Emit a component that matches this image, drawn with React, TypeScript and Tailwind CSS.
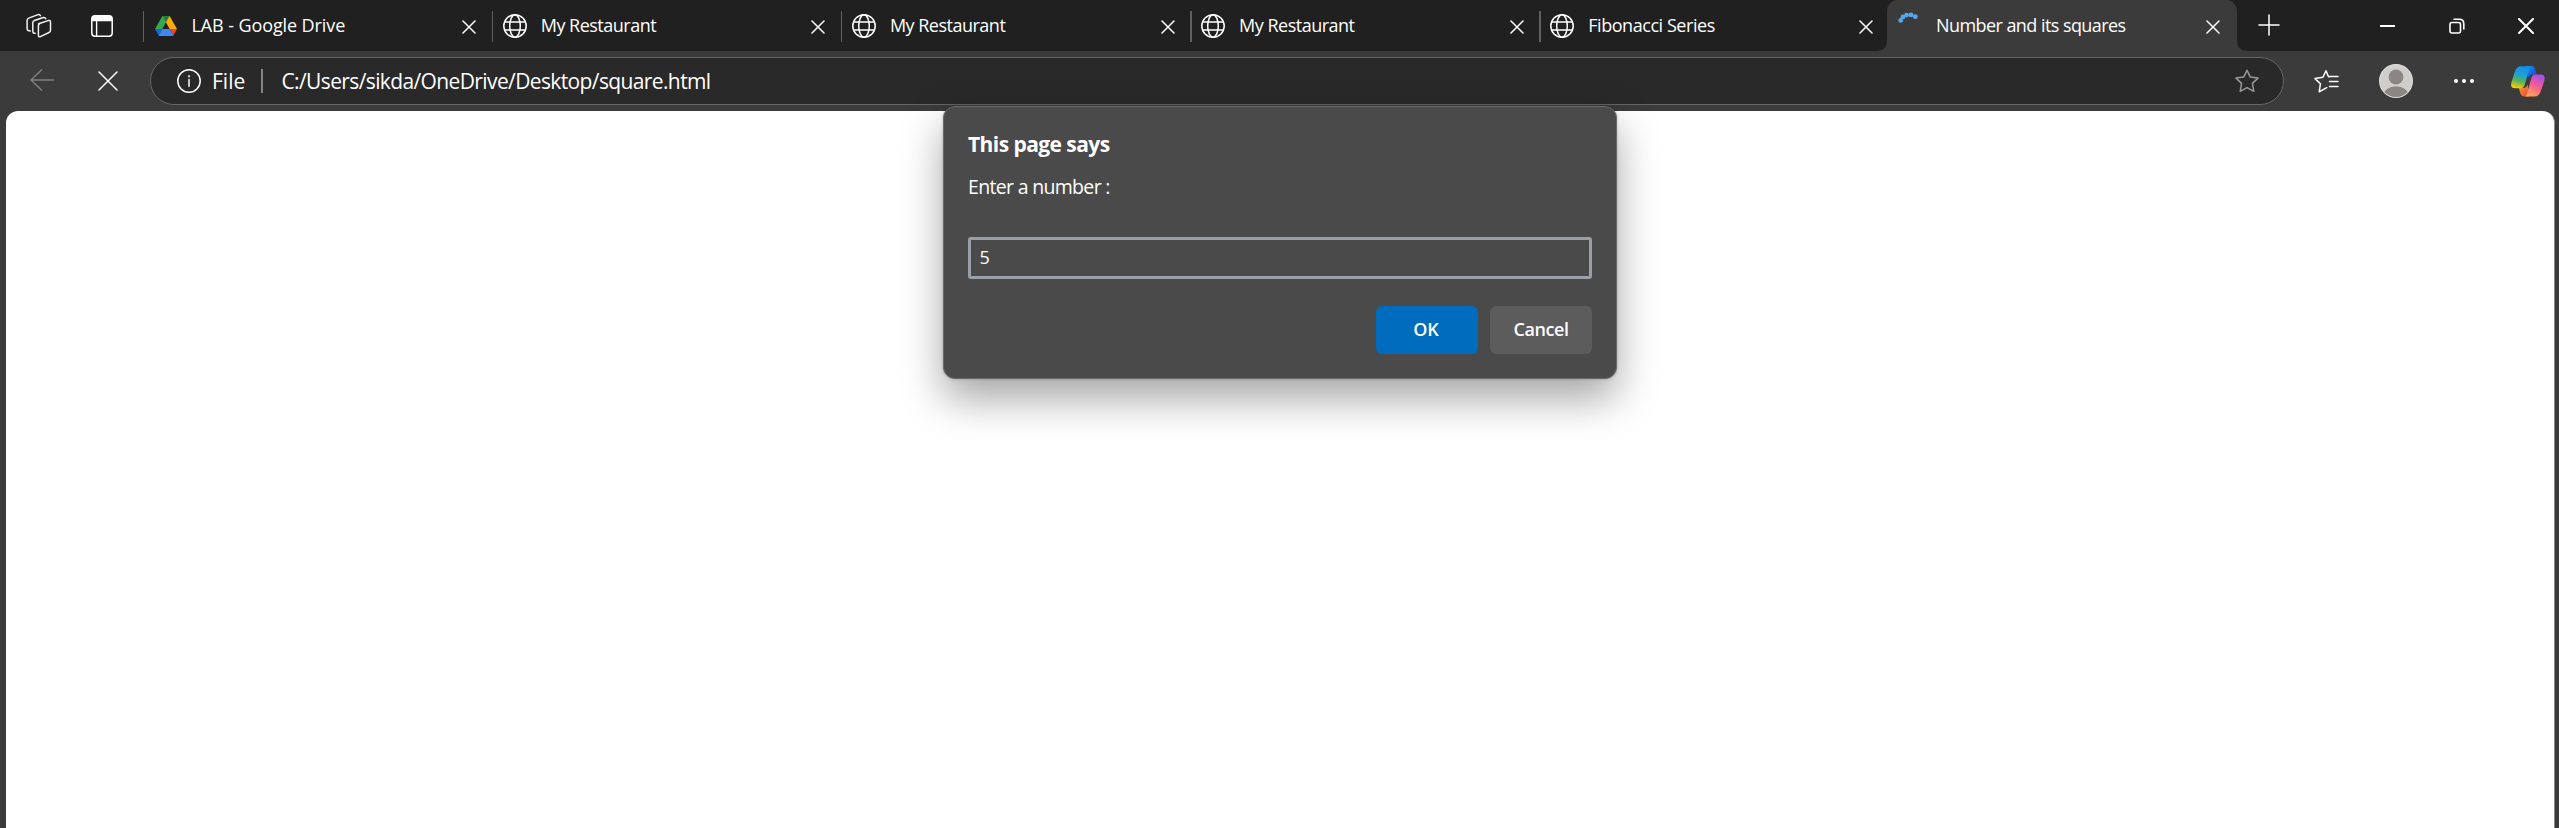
import type { ReactNode } from "react";

function Cross({ size, stroke = 1.5 }: { size: number; stroke?: number }) {
  return (
    <svg width={size} height={size} viewBox={`0 0 ${size} ${size}`} fill="none" stroke="#fff" strokeWidth={stroke} strokeLinecap="round">
      <path d={`M1 1L${size - 1} ${size - 1}M${size - 1} 1L1 ${size - 1}`} />
    </svg>
  );
}

function Globe() {
  return (
    <svg width="24" height="24" viewBox="0 0 24 24" fill="none" stroke="#fff" strokeWidth="1.5">
      <circle cx="12" cy="12" r="11.2" />
      <ellipse cx="12" cy="12" rx="5.3" ry="11.2" />
      <path d="M1.6 8h20.8M1.6 16h20.8" />
    </svg>
  );
}

function Drive() {
  return (
    <svg width="22" height="20" viewBox="0 0 22 20">
      <path d="M7.4 0L0 13h7.2L11 6.3z" fill="#34a853" />
      <path d="M7.4 0h7.2L22 13h-7.3z" fill="#fbad04" />
      <path d="M7.4 0h7.2L11 6.3z" fill="#188038" />
      <path d="M0 13h7.2L3.6 19.4z" fill="#1967d2" />
      <path d="M14.7 13H22l-3.6 6.5z" fill="#ea4335" />
      <path d="M7.2 13h7.5l3.7 6.5q-.4.4-1.2.4H4.8q-.8 0-1.2-.4z" fill="#4285f4" />
    </svg>
  );
}

function Spinner() {
  return (
    <svg width="24" height="24" viewBox="0 0 24 24" fill="#55a9e6">
      <circle cx="4.7" cy="9.4" r="2.4" />
      <circle cx="7" cy="5.9" r="2.4" />
      <circle cx="10.6" cy="4.1" r="2.4" />
      <circle cx="15" cy="3.9" r="2.4" />
      <circle cx="19.3" cy="5.7" r="2.4" />
    </svg>
  );
}

function Workspaces() {
  return (
    <svg width="26" height="26" viewBox="0 0 26 26" fill="none" stroke="#f2f2f2" strokeWidth="1.5" strokeLinejoin="round" strokeLinecap="round">
      <path d="M12.6 10.8l9.6-3.2q2.3-.6 2.3 1.6v8q0 1.6-1.5 2.3l-8.6 4.1q-2 .8-2-1.4v-9.2q0-1.7 1.2-2.2z" />
      <path d="M9.200 20.300q-2.400.3-2.400-2v-8.500q0-1.700 1.600-2.300l9-3q1.700-.4 2.400 1.200" />
      <path d="M4.300 18q-3.200 0-3.200-2.600v-8q0-1.700 1.600-2.300l9.300-3.500q1.700-.5 2.400 1" />
    </svg>
  );
}

function TabActions() {
  return (
    <svg width="22" height="22" viewBox="0 0 22 22" fill="none">
      <rect x=".8" y=".8" width="20.4" height="20.4" rx="3.2" stroke="#fff" strokeWidth="1.5" />
      <path d="M.8 6.200V4Q.8.800 4 .800h14q3.200 0 3.200 3.200v2.200z" fill="#fff" />
      <path d="M5.600 6v15" stroke="#fff" strokeWidth="1.4" />
    </svg>
  );
}

function Copilot() {
  return (
    <svg width="34" height="31" viewBox="0 0 34 31">
      <defs>
        <linearGradient id="ribbonLeft" x1=".6" y1="0" x2=".35" y2="1">
          <stop offset="0" stopColor="#1090e8" />
          <stop offset=".35" stopColor="#1a9ede" />
          <stop offset=".68" stopColor="#57b35c" />
          <stop offset="1" stopColor="#f4cb08" />
        </linearGradient>
        <linearGradient id="ribbonRight" x1=".7" y1="0" x2=".3" y2="1">
          <stop offset="0" stopColor="#a34ff0" />
          <stop offset=".45" stopColor="#f0589a" />
          <stop offset="1" stopColor="#fda353" />
        </linearGradient>
        <linearGradient id="foldTop" x1="0" y1="0" x2="1" y2="1">
          <stop offset="0" stopColor="#1c8ef0" />
          <stop offset="1" stopColor="#1545c5" />
        </linearGradient>
        <linearGradient id="foldBottom" x1="0" y1="0" x2="1" y2="1">
          <stop offset="0" stopColor="#fa9a38" />
          <stop offset="1" stopColor="#ed4630" />
        </linearGradient>
      </defs>
      <path d="M15 0h5.200c2.500 0 3.500 1.700 4.200 4.200l1.300 4.300h-4c-2.500 0-3.800 1.500-4.500 3.800z" fill="url(#foldTop)" />
      <path d="M18.500 30.500h-5c-2.500 0-3.700-1.600-4.400-4l-1.200-4.400h4.300c2.600 0 3.700-1.400 4.400-3.800z" fill="url(#foldBottom)" />
      <path d="M20.300.200H9.800C6.500.2 4.700 2.900 3.500 6.600L.600 15.800C-.9 20.400.8 22.200 4 22.200h6c2.300 0 3.200-1.500 4-4.200L17.800 4.600C18.500 2 19.100.5 21 .5z" fill="url(#ribbonLeft)" />
      <path d="M14 30.500h9.900c3.300 0 5.200-2.700 6.300-6.400l3-9.200c1.400-4.500-.3-6.400-3.500-6.400h-5.400c-2.300 0-3.300 1.600-4.100 4.200l-3.800 13.400c-.7 2.600-1 4-2.400 4.400z" fill="url(#ribbonRight)" />
    </svg>
  );
}

function Tab({ icon, title, spacing }: { icon: ReactNode; title: string; spacing: string }) {
  return (
    <div className="flex h-[51px] w-[349.200px] shrink-0 items-center pr-[15.500px]">
      <div className="mt-0.5 h-[31px] w-[1.500px] shrink-0 bg-[#606060]" />
      <div className="ml-[9.500px] flex w-6 shrink-0 justify-center pt-px">{icon}</div>
      <span className={`ml-[14px] flex-1 whitespace-nowrap pb-px text-[18px] leading-[49px] ${spacing}`}>{title}</span>
      <div className="pt-0.5">
        <Cross size={14} />
      </div>
    </div>
  );
}

function Flare({ flip = false }: { flip?: boolean }) {
  return (
    <svg width="11" height="11" viewBox="0 0 11 11" className={flip ? "-scale-x-100" : ""}>
      <path d="M11 0v11H0Q11 11 11 0z" fill="#3b3b3b" />
    </svg>
  );
}

function TabStrip() {
  return (
    <div className="flex h-[51px] w-full bg-[#202020]">
      <div className="flex w-[142.500px] shrink-0 items-center pl-[26px]">
        <Workspaces />
        <div className="ml-[39px] pt-px">
          <TabActions />
        </div>
      </div>
      <Tab icon={<Drive />} title="LAB - Google Drive" spacing="tracking-[-0.100px]" />
      <Tab icon={<Globe />} title="My Restaurant" spacing="tracking-[-0.500px]" />
      <Tab icon={<Globe />} title="My Restaurant" spacing="tracking-[-0.500px]" />
      <Tab icon={<Globe />} title="My Restaurant" spacing="tracking-[-0.500px]" />
      <Tab icon={<Globe />} title="Fibonacci Series" spacing="tracking-[-0.450px]" />
      <div className="relative -ml-[1px] flex h-[51px] w-[349.500px] shrink-0 items-center rounded-t-[11px] bg-[#3b3b3b] pl-[9px] pr-[16.500px]">
        <div className="absolute bottom-0 -left-[11px]">
          <Flare />
        </div>
        <div className="absolute -right-[11px] bottom-0">
          <Flare flip />
        </div>
        <div className="-mt-1.5">
          <Spinner />
        </div>
        <span className="ml-[15.500px] flex-1 whitespace-nowrap pb-px text-[18px] leading-[49px] tracking-[-0.560px]">Number and its squares</span>
        <div className="pt-0.5">
          <Cross size={14} />
        </div>
      </div>
      <div className="flex flex-1 items-center pl-[21px] pr-[25px]">
        <svg className="-mt-0.5" width="22" height="22" viewBox="0 0 22 22" stroke="#fff" strokeWidth="1.5" strokeLinecap="round">
          <path d="M11 1v20M1 11h20" />
        </svg>
        <div className="ml-auto flex items-center">
          <div className="h-[2px] w-[15px] bg-white" />
          <svg className="ml-[54px]" width="16" height="16" viewBox="0 0 16 16" fill="none" stroke="#fff" strokeWidth="1.6" strokeLinecap="round">
            <rect x="1" y="4.500" width="10.500" height="10.500" rx="2" />
            <path d="M5 1.300h5.200q4.600 0 4.600 4.600v5" />
          </svg>
          <div className="ml-[53px]">
            <Cross size={16} stroke={2} />
          </div>
        </div>
      </div>
    </div>
  );
}

function Toolbar() {
  return (
    <div className="flex h-[60px] w-full items-center bg-[#3b3b3b] pl-[30px] pr-[14px]">
      <svg className="-mt-0.5" width="24" height="22" viewBox="0 0 24 22" fill="none" stroke="#808080" strokeWidth="1.5" strokeLinecap="round" strokeLinejoin="round">
        <path d="M23.300 11H1M11.500 1L1 11l10.500 10" />
      </svg>
      <div className="ml-11">
        <Cross size={20} />
      </div>
      <div className="ml-8 flex h-12 w-[2134px] shrink-0 items-center rounded-full border-[1.500px] border-[#666] bg-[#292929] pl-[26px] pr-[24px] text-[21px] leading-[48px]">
        <svg width="24" height="24" viewBox="0 0 24 24" fill="none" stroke="#fff" strokeWidth="1.5" strokeLinecap="round">
          <circle cx="12" cy="12" r="11.200" />
          <path d="M12 10.500v6.700" />
          <circle cx="12" cy="7.300" r=".4" />
        </svg>
        <span className="ml-[11px] w-[36px]">File</span>
        <div className="ml-[13px] h-6 w-[1.500px] bg-[#858585]" />
        <span className="ml-[19px] flex-1 whitespace-nowrap tracking-[-0.620px]">C:/Users/sikda/OneDrive/Desktop/square.html</span>
        <svg width="24" height="24" viewBox="0 0 24 24" fill="none" stroke="#999" strokeWidth="1.5" strokeLinejoin="round">
          <path d="M12 1.200l3.300 6.900 7.700 1-5.600 5.300 1.400 7.900L12 18.600l-6.800 3.700 1.400-7.900L1 9.100l7.700-1z" />
        </svg>
      </div>
      <div className="ml-[30px]">
        <svg width="25" height="24" viewBox="0 0 25 24" fill="none" stroke="#fff" strokeWidth="1.5" strokeLinejoin="round" strokeLinecap="round">
          <path d="M24 7.500h-8l-1.500.3L12 1.700 8.900 8.200 1 9.600l5.400 5.200-1.200 8 7.600-4.100M15.500 12.500H24M15.500 17.500H24" />
        </svg>
      </div>
      <svg className="ml-[40px]" width="34" height="34" viewBox="0 0 34 34">
        <defs>
          <clipPath id="avatarClip">
            <circle cx="17" cy="17" r="16" />
          </clipPath>
        </defs>
        <circle cx="17" cy="17" r="17" fill="#e0dfdd" />
        <circle cx="17" cy="17" r="16" fill="#d0cecb" />
        <circle cx="17" cy="13" r="7.400" fill="#8a8683" />
        <ellipse cx="17" cy="31.500" rx="12.500" ry="9.300" fill="#8a8683" clipPath="url(#avatarClip)" />
      </svg>
      <div className="ml-[41px] flex gap-1">
        <div className="size-1 rounded-full bg-white" />
        <div className="size-1 rounded-full bg-white" />
        <div className="size-1 rounded-full bg-white" />
      </div>
      <div className="ml-auto">
        <Copilot />
      </div>
    </div>
  );
}

function Prompt() {
  return (
    <div className="absolute top-[106px] left-[943px] flex h-[273px] w-[674px] flex-col rounded-xl border border-[#6a6a6a] bg-[#4a4a4a] px-6 pt-[22px] shadow-[0_0_3px_rgba(0,0,0,0.250),0_20px_42px_rgba(0,0,0,0.350)]">
      <h1 className="text-[21px] leading-[30px] font-bold tracking-[-0.560px]">This page says</h1>
      <p className="mt-[13px] text-[19.500px] leading-[30px] tracking-[-0.680px]">Enter a number :</p>
      <div className="mt-[35px] h-[42px] shrink-0 rounded-[3px] border-[3px] border-[#9aa0a6] pl-[8.500px] text-[18px] leading-[35px]">5</div>
      <div className="mt-[27px] flex justify-end gap-3 text-[18px] leading-[46px] font-semibold">
        <button className="h-12 w-[102px] rounded-md bg-[#006cbe] pr-0.5 pb-0.5">OK</button>
        <button className="h-12 w-[102px] rounded-md bg-[#5c5c5c] pb-0.5 tracking-[-0.400px]">Cancel</button>
      </div>
    </div>
  );
}

export default function App() {
  return (
    <div className="relative flex h-[828px] w-[2559px] flex-col overflow-hidden bg-[#3b3b3b] font-['Open_Sans','Noto_Sans',sans-serif] text-white">
      <TabStrip />
      <Toolbar />
      <div className="mr-1 ml-1.5 flex-1 rounded-t-xl border-r border-[#8a8a8a] bg-white" />
      <Prompt />
    </div>
  );
}
